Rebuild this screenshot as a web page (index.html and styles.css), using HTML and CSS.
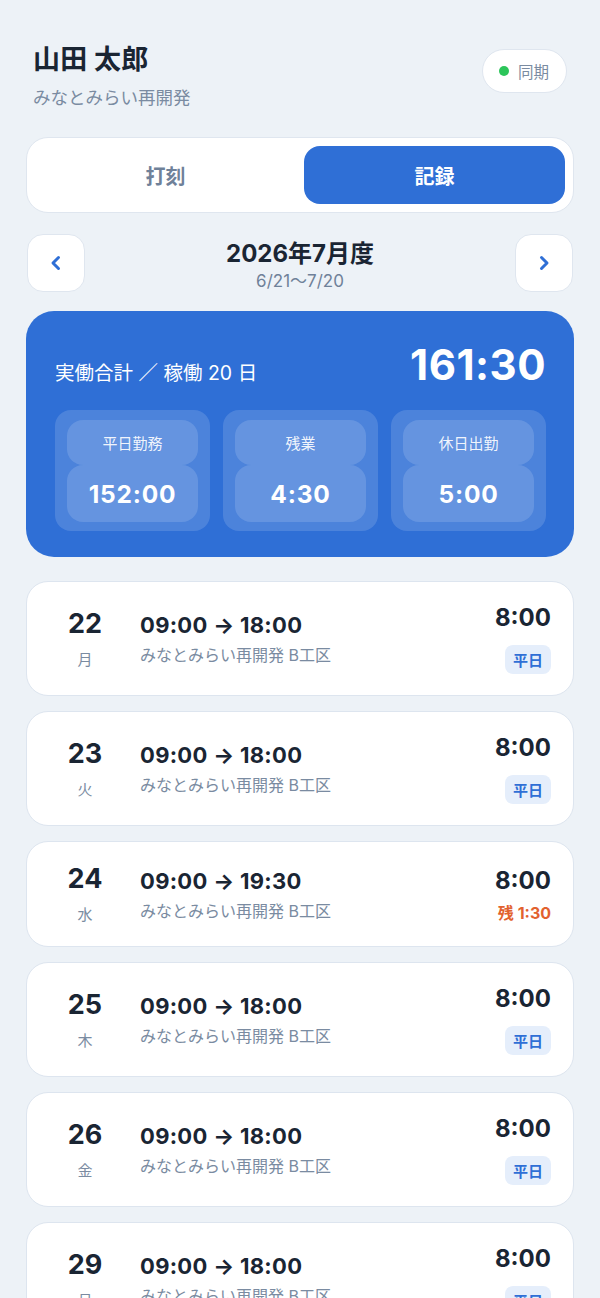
FILE: index.html
```html
<!DOCTYPE html>
<html lang="ja">
<head>
<meta charset="utf-8">
<title>記録</title>
<link rel="stylesheet" href="styles.css">
</head>
<body>
<div class="app">
  <header class="header">
    <div class="who">
      <div class="name">山田 太郎</div>
      <div class="site">みなとみらい再開発</div>
    </div>
    <div class="sync"><span class="dot"></span>同期</div>
  </header>

  <nav class="tabs">
    <div class="tab">打刻</div>
    <div class="tab active">記録</div>
  </nav>

  <div class="month">
    <button class="navbtn" aria-label="前月">
      <svg width="14" height="18" viewBox="0 0 14 18"><path d="M9.5 3.5 L4 9 L9.5 14.5" fill="none" stroke="#2f6fd6" stroke-width="3" stroke-linecap="round" stroke-linejoin="round"/></svg>
    </button>
    <div class="month-title">
      <div class="mt">2026年7月度</div>
      <div class="ms">6/21〜7/20</div>
    </div>
    <button class="navbtn" aria-label="翌月">
      <svg width="14" height="18" viewBox="0 0 14 18"><path d="M4.5 3.5 L10 9 L4.5 14.5" fill="none" stroke="#2f6fd6" stroke-width="3" stroke-linecap="round" stroke-linejoin="round"/></svg>
    </button>
  </div>

  <section class="summary">
    <div class="sum-top">
      <div class="sum-label">実働合計 ／ 稼働 20 日</div>
      <div class="sum-total">161:30</div>
    </div>
    <div class="stats">
      <div class="stat"><div class="stat-label">平日勤務</div><div class="stat-val">152:00</div></div>
      <div class="stat"><div class="stat-label">残業</div><div class="stat-val">4:30</div></div>
      <div class="stat"><div class="stat-label">休日出勤</div><div class="stat-val">5:00</div></div>
    </div>
  </section>

  <div class="days">
    <div class="day">
      <div class="date"><div class="dn">22</div><div class="dw">月</div></div>
      <div class="mid"><div class="time">09:00 → 18:00</div><div class="loc">みなとみらい再開発 B工区</div></div>
      <div class="right"><div class="hours">8:00</div><div class="badge">平日</div></div>
    </div>
    <div class="day">
      <div class="date"><div class="dn">23</div><div class="dw">火</div></div>
      <div class="mid"><div class="time">09:00 → 18:00</div><div class="loc">みなとみらい再開発 B工区</div></div>
      <div class="right"><div class="hours">8:00</div><div class="badge">平日</div></div>
    </div>
    <div class="day">
      <div class="date"><div class="dn">24</div><div class="dw">水</div></div>
      <div class="mid"><div class="time">09:00 → 19:30</div><div class="loc">みなとみらい再開発 B工区</div></div>
      <div class="right"><div class="hours">8:00</div><div class="ot">残 1:30</div></div>
    </div>
    <div class="day">
      <div class="date"><div class="dn">25</div><div class="dw">木</div></div>
      <div class="mid"><div class="time">09:00 → 18:00</div><div class="loc">みなとみらい再開発 B工区</div></div>
      <div class="right"><div class="hours">8:00</div><div class="badge">平日</div></div>
    </div>
    <div class="day">
      <div class="date"><div class="dn">26</div><div class="dw">金</div></div>
      <div class="mid"><div class="time">09:00 → 18:00</div><div class="loc">みなとみらい再開発 B工区</div></div>
      <div class="right"><div class="hours">8:00</div><div class="badge">平日</div></div>
    </div>
    <div class="day">
      <div class="date"><div class="dn">29</div><div class="dw">月</div></div>
      <div class="mid"><div class="time">09:00 → 18:00</div><div class="loc">みなとみらい再開発 B工区</div></div>
      <div class="right"><div class="hours">8:00</div><div class="badge">平日</div></div>
    </div>
  </div>
</div>
</body>
</html>
```

FILE: styles.css
```css
* { box-sizing: border-box; }
html, body { margin: 0; padding: 0; }
body {
  background: #edf2f7;
  font-family: Inter, "Noto Sans CJK JP", "Noto Sans", sans-serif;
  color: #1a2533;
}
.app { padding: 43px 26px 40px; }

.header { display: flex; justify-content: space-between; align-items: center; padding: 0 7px; }
.name { font-size: 27px; font-weight: 700; line-height: 34px; letter-spacing: 0.2px; }
.site { margin-top: 10px; font-size: 17.5px; line-height: 22px; color: #7a8ba1; }
.sync {
  display: flex; align-items: center; gap: 9px;
  height: 44px; padding: 0 17px 0 16px;
  background: #fff; border: 1.5px solid #dfe6ef; border-radius: 22px;
  font-size: 15.5px; color: #7a8ba1; margin-top: -10px;
}
.dot { width: 10px; height: 10px; border-radius: 50%; background: #2cc55a; }

.tabs {
  margin-top: 28px;
  display: flex; gap: 8px; padding: 8px;
  background: #fff; border: 1.5px solid #dfe6ef; border-radius: 22px;
}
.tab {
  flex: 1; height: 58px; display: flex; align-items: center; justify-content: center;
  font-size: 20px; font-weight: 700; color: #6f8199; border-radius: 16px;
}
.tab.active { background: #2f6fd6; color: #fff; }

.month { margin-top: 21px; display: flex; align-items: center; justify-content: space-between; padding: 0 1px; }
.navbtn {
  width: 58px; height: 58px; border-radius: 16px;
  background: #fff; border: 1.5px solid #dfe6ef;
  display: flex; align-items: center; justify-content: center; padding: 0;
}
.month-title { text-align: center; margin-top: 5px; }
.mt { font-size: 24px; font-weight: 700; line-height: 30px; }
.ms { margin-top: 1px; font-size: 17px; line-height: 22px; color: #6f8199; }

.summary {
  margin-top: 19px;
  background: #2f6fd6; border-radius: 28px;
  padding: 29px 28px 26px 29px; color: #fff;
}
.sum-top { display: flex; justify-content: space-between; align-items: baseline; }
.sum-label { font-size: 19.5px; line-height: 24px; }
.sum-total { font-size: 42px; font-weight: 700; line-height: 50px; letter-spacing: 0.5px; }
.stats { margin-top: 20px; display: grid; grid-template-columns: repeat(3, 1fr); gap: 13px; }
.stat {
  background: rgba(255,255,255,0.14); border-radius: 16px;
  padding: 10px 12px 9px;
}
.stat-label {
  background: rgba(255,255,255,0.14); border-radius: 16px;
  height: 45px; display: flex; align-items: center; justify-content: center;
  font-size: 15px; color: rgba(255,255,255,0.92);
}
.stat-val {
  background: rgba(255,255,255,0.14); border-radius: 16px;
  height: 57px; display: flex; align-items: center; justify-content: center;
  font-size: 24.5px; font-weight: 700; letter-spacing: 0.8px;
}

.days { margin-top: 24px; display: flex; flex-direction: column; gap: 15px; }
.day {
  display: flex; align-items: center;
  background: #fff; border: 1.5px solid #dde5ef; border-radius: 22px;
  padding: 21px 22px 21px 18px;
}
.date { width: 80px; text-align: center; margin-right: 15px; }
.dn { font-size: 27px; font-weight: 700; line-height: 32px; }
.dw { margin-top: 10px; font-size: 15px; line-height: 20px; color: #7a8ba1; }
.mid { flex: 1; }
.time { font-size: 22px; font-weight: 700; line-height: 28px; letter-spacing: 0.3px; }
.loc { margin-top: 5px; font-size: 16px; line-height: 22px; color: #7a8ba1; }
.right { display: flex; flex-direction: column; align-items: flex-end; }
.hours { font-size: 24px; font-weight: 700; line-height: 30px; }
.badge {
  margin-top: 12px; height: 29px; padding: 0 8px;
  display: flex; align-items: center;
  background: #e5eefb; color: #2f6fd6; border-radius: 8px;
  font-size: 15px; font-weight: 700;
}
.ot { margin-top: 7px; font-size: 16px; line-height: 20px; font-weight: 700; color: #e2622f; }
```
